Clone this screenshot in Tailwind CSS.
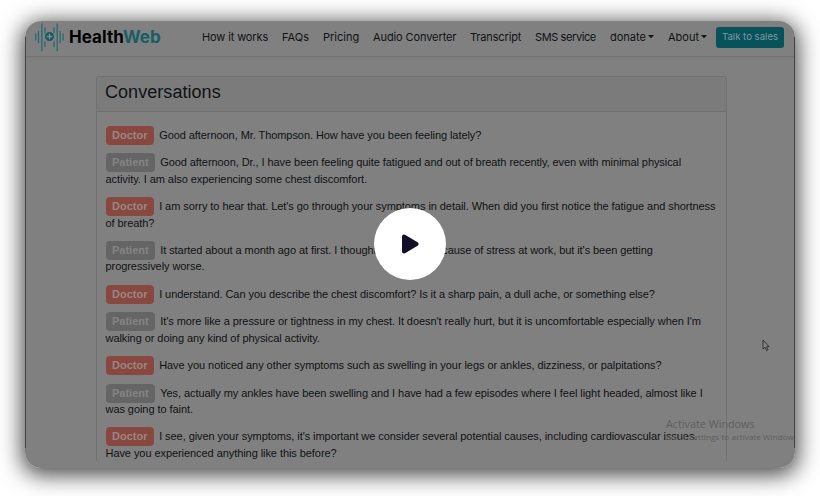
<!DOCTYPE html>
<html lang="en">
<head>
<meta charset="utf-8">
<title>HealthWeb</title>
<script src="https://cdn.jsdelivr.net/npm/@tailwindcss/browser@4"></script>
</head>
<body class="bg-white w-[820px] h-[496px] overflow-hidden font-['Liberation_Sans',Arial,sans-serif]">
<div class="pt-[21px] pl-[25px]">
<main class="relative w-[770px] h-[447px] rounded-[16px] shadow-[0_4px_22px_3px_rgba(0,0,0,0.72)]">
<div class="relative w-full h-full rounded-[16px] overflow-hidden bg-[#808080] text-[#101214]">
  <header class="flex items-center h-[36px] border-b border-[#747474] shadow-[0_1px_2px_rgba(0,0,0,0.06)] pb-[3px] font-['Inter',sans-serif]">
    <svg class="ml-[10px] w-[29px] h-[29px] shrink-0" viewBox="0 0 29 29" fill="none" stroke="#145d65" stroke-width="1.3" stroke-linecap="round">
      <path d="M.8 11v6M3.5 8.5v11M6.9 .8v27M10 5v4.5M10 19v4.5M19 5v4.5M19 19v4.5M22.2 .8v27M25.2 8.5v11M28.1 11v6" stroke="#266b73"/>
      <circle cx="14.5" cy="13.5" r="4.5" fill="#145d65" stroke="none"/><path d="M14.5 11.2v4.6M12.2 13.5h4.6" stroke="#7c8c8e"/>
    </svg>
    <div class="ml-[5px] w-[91px] shrink-0 text-[17px] leading-[20px] font-bold tracking-[0.05px] text-black whitespace-nowrap">Health<span class="text-[#175e66]">Web</span></div>
    <nav class="ml-[42px] flex items-center text-[11px] leading-[16px] whitespace-nowrap shrink-0">
      <a class="w-[80px] tracking-[-0.12px]">How it works</a>
      <a class="w-[41px] tracking-[0.05px]">FAQs</a>
      <a class="w-[50px]">Pricing</a>
      <a class="w-[97px] tracking-[-0.1px]">Audio Converter</a>
      <a class="w-[65px] tracking-[-0.15px]">Transcript</a>
      <a class="w-[75px] tracking-[-0.4px]">SMS service</a>
      <a class="w-[58px] flex items-center gap-[2px]">donate<svg class="w-[6px] h-[4px]" viewBox="0 0 6 4"><path d="M0 0h6L3 3.3z" fill="#101214"/></svg></a>
      <a class="w-[48px] flex items-center gap-[2px]">About<svg class="w-[6px] h-[4px]" viewBox="0 0 6 4"><path d="M0 0h6L3 3.3z" fill="#101214"/></svg></a>
    </nav>
    <button class="w-[68px] h-[21px] rounded-[3px] bg-[#08525b] text-[#7d9b9e] text-[9.6px] whitespace-nowrap shrink-0">Talk to sales</button>
  </header>
  <section class="ml-[71px] mt-[19px] w-[631px] h-[385px] border border-b-0 border-[#707070] rounded-t-[3px]">
    <h1 class="h-[35px] pl-[8px] pt-[4px] bg-[#7b7b7b] border-b border-[#707070] text-[18px] leading-[23px] tracking-[0.05px]">Conversations</h1>
    <div class="pt-[14.8px] pl-[8.5px] text-[11px] leading-[16.5px] tracking-[-0.066px] whitespace-nowrap">
      <p class="mb-[10.9px]"><b class="rounded-[4px] bg-[#88483f] text-[#988784] px-[6.6px] pt-[3px] pb-[4px] mr-[5px] tracking-normal">Doctor</b>Good afternoon, Mr. Thompson. How have you been feeling lately?</p>
      <p class="mb-[10.9px]"><b class="rounded-[4px] bg-[#656565] text-[#848484] px-[6.5px] pt-[3px] pb-[4px] mr-[5px] tracking-normal">Patient</b>Good afternoon, Dr., I have been feeling quite fatigued and out of breath recently, even with minimal physical<br>activity. I am also experiencing some chest discomfort.</p>
      <p class="mb-[10.9px]"><b class="rounded-[4px] bg-[#88483f] text-[#988784] px-[6.6px] pt-[3px] pb-[4px] mr-[5px] tracking-normal">Doctor</b>I am sorry to hear that. Let's go through your symptoms in detail. When did you first notice the fatigue and shortness<br>of breath?</p>
      <p class="mb-[10.9px]"><b class="rounded-[4px] bg-[#656565] text-[#848484] px-[6.5px] pt-[3px] pb-[4px] mr-[5px] tracking-normal">Patient</b>It started about a month ago at first. I thought it was just because of stress at work, but it's been getting<br>progressively worse.</p>
      <p class="mb-[10.9px]"><b class="rounded-[4px] bg-[#88483f] text-[#988784] px-[6.6px] pt-[3px] pb-[4px] mr-[5px] tracking-normal">Doctor</b>I understand. Can you describe the chest discomfort? Is it a sharp pain, a dull ache, or something else?</p>
      <p class="mb-[10.9px]"><b class="rounded-[4px] bg-[#656565] text-[#848484] px-[6.5px] pt-[3px] pb-[4px] mr-[5px] tracking-normal">Patient</b>It's more like a pressure or tightness in my chest. It doesn't really hurt, but it is uncomfortable especially when I'm<br>walking or doing any kind of physical activity.</p>
      <p class="mb-[10.9px]"><b class="rounded-[4px] bg-[#88483f] text-[#988784] px-[6.6px] pt-[3px] pb-[4px] mr-[5px] tracking-normal">Doctor</b>Have you noticed any other symptoms such as swelling in your legs or ankles, dizziness, or palpitations?</p>
      <p class="mb-[10.9px]"><b class="rounded-[4px] bg-[#656565] text-[#848484] px-[6.5px] pt-[3px] pb-[4px] mr-[5px] tracking-normal">Patient</b>Yes, actually my ankles have been swelling and I have had a few episodes where I feel light headed, almost like I<br>was going to faint.</p>
      <p><b class="rounded-[4px] bg-[#88483f] text-[#988784] px-[6.6px] pt-[3px] pb-[4px] mr-[5px] tracking-normal">Doctor</b>I see, given your symptoms, it's important we consider several potential causes, including cardiovascular issues.<br>Have you experienced anything like this before?</p>
    </div>
  </section>
  <div class="absolute left-[641px] top-[395px] font-['Open_Sans',sans-serif] text-[#5e5e5e] whitespace-nowrap">
    <div class="text-[10.8px] leading-[15px]">Activate Windows</div>
    <div class="text-[8px] leading-[11px] tracking-[0.08px]"><span class="text-[#727272]">Go to S</span>ettings to activate Windows.</div>
  </div>
  <svg class="absolute left-[737px] top-[318px] w-[8px] h-[13px]" viewBox="0 0 8 13"><path d="M1 1v9l2-1.8 1.5 3.3 1.5-.7-1.5-3.1h2.6z" fill="#858585" stroke="#222" stroke-width=".8"/></svg>
  <div class="absolute left-0 top-[16px] w-px h-[411px] bg-[#444]"></div>
  <div class="absolute right-0 top-[16px] w-px h-[411px] bg-[#444]"></div>
</div>
<button class="absolute left-[349px] top-[187px] w-[72px] h-[72px] rounded-full bg-white flex items-center justify-center" aria-label="Play">
  <svg class="w-[18px] h-[20px]" viewBox="0 0 18 20"><path d="M3 2.5v15L15.5 10z" fill="#130f26" stroke="#130f26" stroke-width="4" stroke-linejoin="round"/></svg>
</button>
</main>
</div>
</body>
</html>
